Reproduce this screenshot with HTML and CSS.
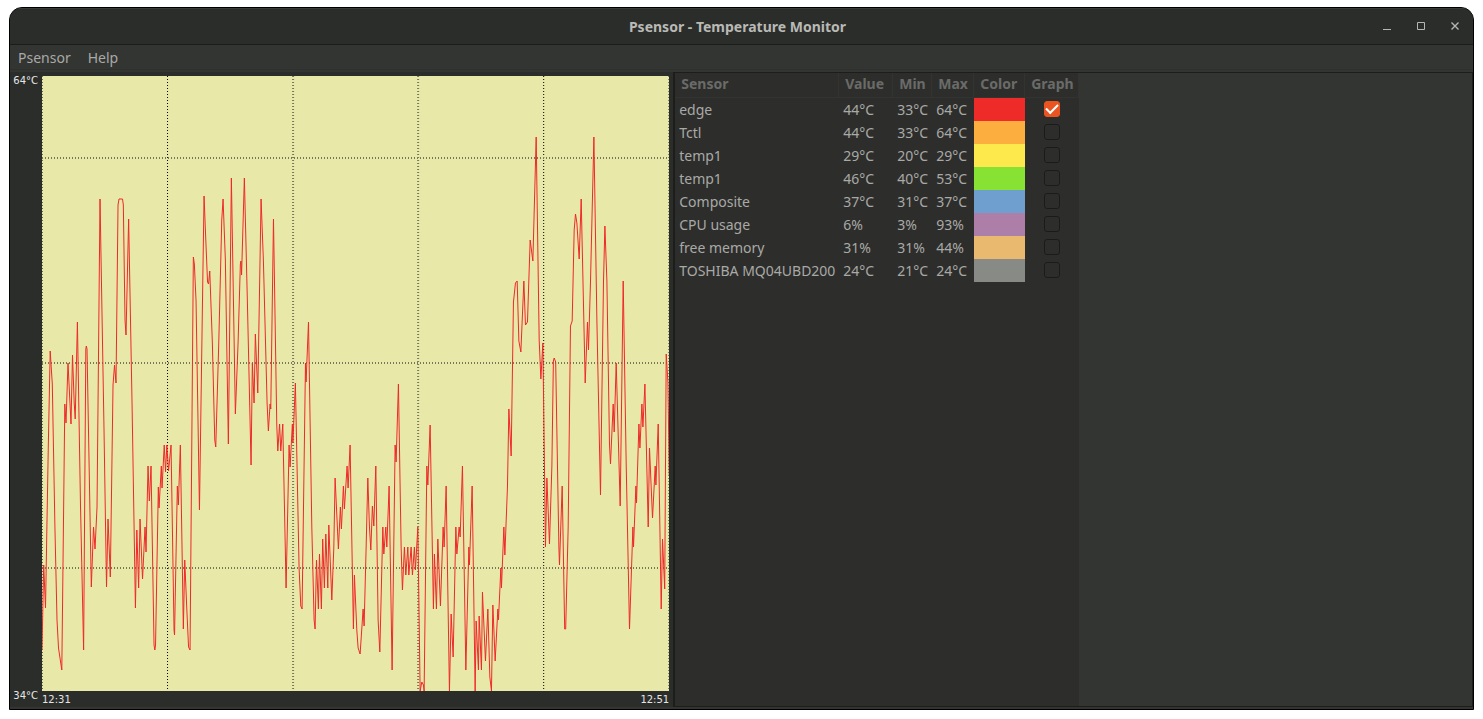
FILE: index.html
```html
<!DOCTYPE html>
<html lang="en">
<head>
<meta charset="utf-8">
<title>Psensor - Temperature Monitor</title>
<link rel="stylesheet" href="styles.css">
</head>
<body>
<div class="window">
  <header class="titlebar">
    <h1 class="title">Psensor - Temperature Monitor</h1>
    <div class="controls">
      <button class="control" type="button" aria-label="Minimize"><svg width="10" height="10" viewBox="0 0 10 10"><path d="M1 7.5H9"/></svg></button>
      <button class="control" type="button" aria-label="Maximize"><svg width="10" height="10" viewBox="0 0 10 10"><path d="M1.5 0.5H8.5V7.5H1.5Z"/></svg></button>
      <button class="control" type="button" aria-label="Close"><svg width="10" height="10" viewBox="0 0 10 10"><path class="cross" d="M1.5 0.5L8.5 7.5M8.5 0.5L1.5 7.5"/></svg></button>
    </div>
  </header>
  <nav class="menubar">
    <button class="menu" type="button">Psensor</button>
    <button class="menu" type="button">Help</button>
  </nav>
  <main class="panes">
    <section class="chart" aria-label="Temperature graph">
      <div class="y-axis"><span>64°C</span><span>34°C</span></div>
      <svg class="plot" viewBox="42 76 627 615" preserveAspectRatio="none">
        <g class="grid">
          <path d="M167.5 76V691M543.5 76V691"/>
        </g>
        <g class="grid soft">
          <path d="M42 158H669M42 363H669M42 568H669M293 76V691M418 76V691"/>
        </g>
        <g class="grid edge">
          <path d="M42.5 76V691M668.5 76V691"/>
        </g>
        <polyline class="trace" points="42,650 43.7,565 45.5,608 48.3,446 50.2,351 52.3,384 54.9,526 57,620 58.5,648 61.8,670 64.8,404 66,423 68,363 71,424 72.5,355 74.2,403 75.2,419 77.4,322 80.5,506 83.6,650 85.8,349 86.3,346 87,349 91.3,587 93.5,527 95,549 97,507 100,199 104,430 106.5,587 108,519 110.3,577 113,385 114.5,365 116,383 118,205 119,199 122.5,199 123.3,205 125,320 126,335 128.6,219 132,403 135.4,608 136.8,530 138.6,588 140,519 142.5,579 145,527 146,552 148,466 149.3,501 151,466 154,645 154.8,650 155.5,645 158.3,487 159,508 161.3,466 162,488 164.2,445 165.5,472 166.8,445 168.5,471 171,445 174,630 174.5,635 177.3,486 178.3,505 180.3,445 183.3,629 184.7,560 186.7,608 188.5,647 190,650 193.3,257 194.3,264 196,301 199.4,510 202.7,283 204,196 205.7,239 207.5,282 208.5,284 209.7,271 212.3,343 214.7,440 215.7,447 218.7,343 221.7,220 223,199 225.3,260 228.3,444 231.3,178 235.3,414 238,343 240.3,264 240.9,261 241.5,275 244.3,178 247.3,301 251,465 252.3,363 254,403 255.3,334 257.7,393 261,199 263.3,260 267,403 268.3,431 270,404 270.7,409 273.4,219 276.7,425 277.7,451 279.5,424 280.7,451 282.7,424 286,588 289,445 290,467 292.3,424 292.8,443 295.3,383 299,568 300.7,606 302,609 305.4,363 306,382 308.4,322 311.7,526 314,620 315,629 316.4,560 318.3,609 319.4,554 321.3,609 322.6,539 324.3,588 325.7,534 327.7,588 328.7,525 331.7,600 333.7,548 335,478 338.3,549 340.3,507 341.3,529 343.3,486 344.3,509 347,466 348,488 350,445 353.3,629 354.3,575 356.7,630 358,648 360,654 363,609 364,626 366,548 367.7,478 369.3,526 370.7,550 372.3,506 373.7,526 375.7,466 378,620 379.7,652 382.7,527 383.7,554 385.7,527 386.7,547 389,486 392,670 395,445 396,462 398.3,384 401,547 402.3,590 404.3,547 405.7,575 407.7,547 408.7,575 411,547 412.3,575 414.3,547 415.3,570 417.7,527 420,691 421.7,682 423.3,685 424,691 426.7,466 427.7,485 430,425 433.3,609 434.3,554 436.3,609 437.7,539 440.3,606 443,527 444,547 446,486 449.3,691 451,614 453,657 455.7,527 456.7,554 459,527 460,537 462.3,466 465.7,670 468.7,547 469.3,565 472,486 475,691 476,621 478.3,670 479,616 481.3,670 482.3,592 485.3,661 487.7,609 489.7,677 491.3,691 492.7,605 495,661 497.7,609 498.3,620 500.7,568 501.3,588 503.7,527 504.7,555 507.3,487 508.7,409 511,456 513.3,302 515.3,283 517,281 518.7,341 520.7,352 523.7,281 525.3,325 527.3,322 530,240 532.7,261 536,137 539,340 540.7,379 542.7,343 545.3,547 546.7,478 549.3,544 551.7,466 553.2,361 554,358 555.5,362 558.7,547 559.3,565 562,486 564.5,629 565.5,629 568,527 570.3,326 572,321 574,230 575.3,214 576.7,223 579,259 581,199 585,383 587.3,322 588.3,350 590.3,282 593.7,137 596.7,321 600.3,495 603.3,282 604.7,226 606.7,281 609.3,444 610.3,464 613,404 614,432 616,363 620,506 623,281 626,465 629.3,629 632.7,527 633.3,547 635.7,486 636.3,503 638.7,424 639.7,448 641.7,404 642.7,427 644.7,384 648,527 649.3,448 652.3,518 655,466 655.7,485 658,424 661,609 662.3,539 664.5,589 666,354 667.7,382 669,475"/>
      </svg>
      <div class="x-axis"><span>12:31</span><span>12:51</span></div>
    </section>
    <section class="sensors">
      <div class="list">
        <table class="table">
          <colgroup><col class="c-sensor"><col class="c-value"><col class="c-min"><col class="c-max"><col class="c-color"><col class="c-graph"></colgroup>
          <thead>
            <tr><th>Sensor</th><th>Value</th><th>Min</th><th>Max</th><th>Color</th><th>Graph</th></tr>
          </thead>
          <tbody>
            <tr><td>edge</td><td>44°C</td><td>33°C</td><td>64°C</td><td class="red"></td><td class="tick"><input type="checkbox" aria-label="Graph edge" checked></td></tr>
            <tr><td>Tctl</td><td>44°C</td><td>33°C</td><td>64°C</td><td class="orange"></td><td class="tick"><input type="checkbox" aria-label="Graph Tctl"></td></tr>
            <tr><td>temp1</td><td>29°C</td><td>20°C</td><td>29°C</td><td class="yellow"></td><td class="tick"><input type="checkbox" aria-label="Graph temp1"></td></tr>
            <tr><td>temp1</td><td>46°C</td><td>40°C</td><td>53°C</td><td class="green"></td><td class="tick"><input type="checkbox" aria-label="Graph temp1"></td></tr>
            <tr><td>Composite</td><td>37°C</td><td>31°C</td><td>37°C</td><td class="blue"></td><td class="tick"><input type="checkbox" aria-label="Graph Composite"></td></tr>
            <tr><td>CPU usage</td><td>6%</td><td>3%</td><td>93%</td><td class="purple"></td><td class="tick"><input type="checkbox" aria-label="Graph CPU usage"></td></tr>
            <tr><td>free memory</td><td>31%</td><td>31%</td><td>44%</td><td class="tan"></td><td class="tick"><input type="checkbox" aria-label="Graph free memory"></td></tr>
            <tr><td>TOSHIBA MQ04UBD200</td><td>24°C</td><td>21°C</td><td>24°C</td><td class="gray"></td><td class="tick"><input type="checkbox" aria-label="Graph TOSHIBA MQ04UBD200"></td></tr>
          </tbody>
        </table>
      </div>
    </section>
  </main>
</div>
</body>
</html>
```

FILE: styles.css
```css
* { box-sizing: border-box; }

body {
  margin: 0;
  height: 100vh;
  padding: 7px 9px 9px;
  display: flex;
  background: #fff;
  color: #a9a9a6;
  font: 14px/23px "Noto Sans", sans-serif;
}

button {
  border: 0;
  padding: 0;
  background: none;
  color: inherit;
  font: inherit;
}

.window {
  flex: 1;
  display: flex;
  flex-direction: column;
  border: 1px solid #000;
  border-radius: 13px 13px 0 0;
  background: #333532;
  overflow: hidden;
}

.titlebar {
  display: grid;
  grid-template-columns: 1fr auto 1fr;
  align-items: center;
  height: 37px;
  padding-right: 8px;
  border-top: 1px solid #393b38;
  border-bottom: 1px solid #1c1d1b;
  background: #2b2d2a;
}

.title {
  grid-column: 2;
  margin: 0;
  color: #b9b9b5;
  font-size: 14px;
  font-weight: 700;
}

.controls {
  justify-self: end;
  display: flex;
  gap: 14px;
}

.control {
  display: grid;
  place-items: center;
  width: 20px;
  height: 20px;
}

.control svg { fill: none; stroke: #b6b6b2; }
.control .cross { stroke-width: 1.4; }

.menubar {
  display: flex;
  gap: 17px;
  height: 25px;
  padding: 0 8px;
  margin-bottom: 2px;
  border-bottom: 1px solid #2e302d;
}

.panes {
  flex: 1;
  min-height: 0;
  display: grid;
  grid-template-columns: 34fr 41fr;
  padding-bottom: 2px;
}

.chart {
  display: grid;
  grid-template: minmax(0, 1fr) 16px / 32px minmax(0, 1fr);
  min-height: 0;
  padding: 4px 4px 0 0;
  background: #2b2d2a;
  color: #e6e6e6;
  font: 10px/10px "DejaVu Sans", sans-serif;
}

.y-axis {
  grid-row: 1 / 3;
  display: flex;
  flex-direction: column;
  justify-content: space-between;
  padding: 0 4px 6px 0;
  text-align: right;
}

.x-axis {
  display: flex;
  justify-content: space-between;
  padding-top: 4px;
}

.plot {
  width: 100%;
  height: 100%;
  background: #e8e8a9;
}

.plot path, .plot polyline { fill: none; vector-effect: non-scaling-stroke; }
.grid { stroke: #000; stroke-width: 1; stroke-dasharray: 1 2; }
.soft { stroke: #77775a; stroke-width: 2; }
.edge { stroke: #6b6b50; }
.trace { stroke: #ef2929; stroke-width: 1; stroke-linejoin: round; }

.sensors {
  min-height: 0;
  border: 1px solid #1d1e1c;
  border-left-width: 2px;
}

.list {
  width: max-content;
  height: 100%;
  background: #2d2e2c;
}

.table {
  table-layout: fixed;
  width: 404px;
  border-collapse: separate;
  border-spacing: 0;
}

.c-sensor { width: 164px; }
.c-value { width: 54px; }
.c-min { width: 39px; }
.c-max { width: 42px; }
.c-color { width: 51px; }
.c-graph { width: 54px; }

.table th {
  height: 25px;
  padding: 0 0 2px 6px;
  line-height: 22px;
  border-right: 1px solid #323431;
  border-bottom: 1px solid #323431;
  color: #6a6b68;
  font-weight: 700;
  text-align: left;
}

.table td {
  height: 23px;
  padding: 0 0 0 4px;
  white-space: nowrap;
}

.table .tick { padding: 0 0 2px; text-align: center; }

.tick input {
  appearance: none;
  display: block;
  width: 16px;
  height: 16px;
  margin: 0 auto;
  border: 1px solid #1b1c1a;
  border-radius: 3px;
}

.tick input:checked {
  border-color: #e95420;
  background: #e95420;
  display: grid;
  place-items: center;
}

.tick input:checked::before {
  content: "";
  width: 10px;
  height: 5px;
  margin-bottom: 3px;
  border: solid #fff;
  border-width: 0 0 2px 2px;
  transform: rotate(-45deg);
}

.red { background: #ef2b29; }
.orange { background: #fcaf3e; }
.yellow { background: #fee94c; }
.green { background: #88e234; }
.blue { background: #6f9fcf; }
.purple { background: #ad7fa8; }
.tan { background: #e8b96e; }
.gray { background: #888a85; }
```
